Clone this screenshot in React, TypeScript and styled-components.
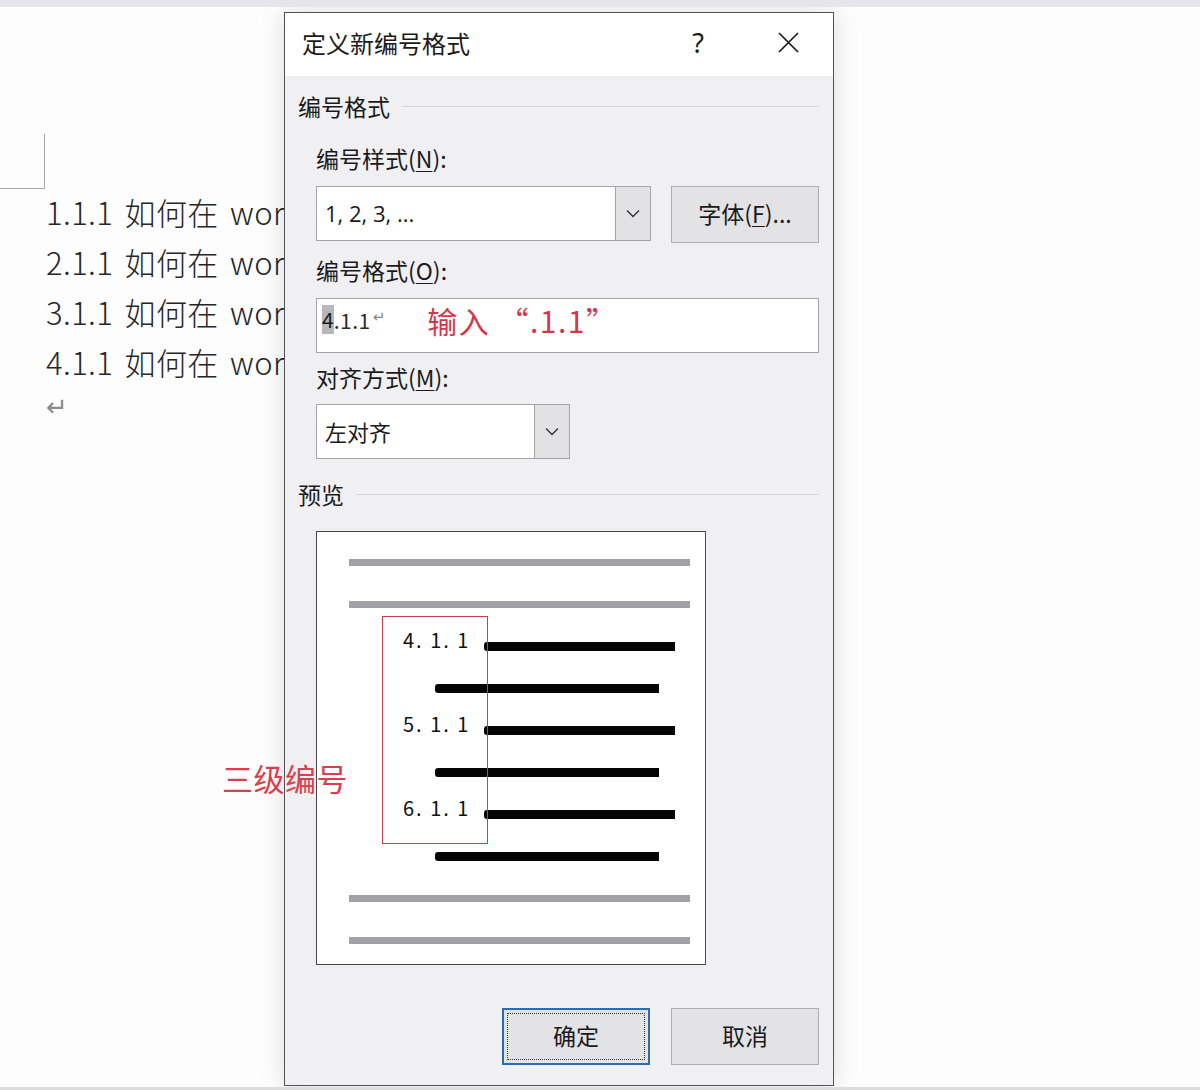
import styled, { createGlobalStyle } from 'styled-components';

const GlobalStyle = createGlobalStyle`
    html, body {
        margin: 0;
        padding: 0;
        background: #fdfdfe;
    }
    * {
        box-sizing: border-box;
    }
`

const CJK = `"Noto Sans CJK SC", "Noto Sans", sans-serif`;

const StyledPage = styled.div`
    position: relative;
    width: 1200px;
    height: 1090px;
    overflow: hidden;
    background: #fdfdfe;
    font-family: ${CJK};
    border-top: 7px solid #e6e6ea;
    border-bottom: 3px solid #dcdce0;
`

const StyledDoc = styled.div`
    display: flex;
    flex-direction: column;
    padding-top: 127px;
`

const StyledCorner = styled.div`
    width: 45px;
    height: 55px;
    border-right: 1px solid #a8a8ac;
    border-bottom: 1px solid #a8a8ac;
`

const StyledDocLines = styled.div`
    display: flex;
    flex-direction: column;
    width: 284px;
    overflow: hidden;
    padding: 0 0 0 46px;
    margin-top: -2px;
`

const StyledDocLine = styled.div`
    font-size: 31px;
    font-weight: 300;
    line-height: 50px;
    color: #262628;
    white-space: nowrap;
    letter-spacing: 0.4px;
    word-spacing: 4px;
`

const StyledReturn = styled.div`
    font-family: "DejaVu Sans", sans-serif;
    font-size: 26px;
    line-height: 40px;
    color: #8a8a8e;
`

const StyledDialog = styled.div`
    position: absolute;
    left: 284px;
    top: 5px;
    width: 550px;
    height: 1074px;
    display: flex;
    flex-direction: column;
    background: #f0f0f3;
    border: 1.5px solid #52525c;
    box-shadow: 0 0 24px rgba(0, 0, 0, 0.13);
`

const StyledTitleBar = styled.div`
    height: 63px;
    display: flex;
    align-items: center;
    padding: 0 0 5px 17px;
    background: #ffffff;
    color: #1a1a1a;
`

const StyledTitle = styled.div`
    flex: 1;
    font-size: 24px;
`

const StyledTitleIcon = styled.div`
    width: 90px;
    display: flex;
    justify-content: center;
    align-items: center;
    font-size: 27px;
    font-family: "Noto Sans", sans-serif;
`

const StyledBody = styled.div`
    flex: 1;
    display: flex;
    flex-direction: column;
    padding: 15px 14px 0 13px;
`

const StyledGroupHeader = styled.div<{ $top: number }>`
    display: flex;
    align-items: center;
    height: 30px;
    margin-top: ${(p) => p.$top}px;
    font-size: 23px;
    color: #1a1a1a;

    &::after {
        content: '';
        flex: 1;
        height: 1px;
        margin-left: 12px;
        background: #d6d6da;
    }
`

const StyledLabel = styled.div<{ $top: number }>`
    display: flex;
    margin: ${(p) => p.$top}px 0 0 18px;
    height: 28px;
    line-height: 28px;
    font-size: 23px;
    color: #1a1a1a;
`

const StyledKey = styled.span`
    text-decoration: underline;
    text-decoration-thickness: 1px;
    text-underline-offset: 3px;
`

const StyledRow = styled.div<{ $top: number }>`
    display: flex;
    align-items: flex-start;
    justify-content: space-between;
    margin: ${(p) => p.$top}px 0 0 18px;
`

const StyledCombo = styled.div<{ $width: number }>`
    width: ${(p) => p.$width}px;
    height: 55px;
    display: flex;
    border: 1px solid #a4a4aa;
    background: #ffffff;
`

const StyledComboText = styled.div`
    flex: 1;
    display: flex;
    align-items: center;
    padding: 0 0 2px 8px;
    font-family: "Open Sans", ${CJK};
    font-size: 22px;
    color: #1a1a1a;
`

const StyledComboButton = styled.div`
    width: 35px;
    display: flex;
    align-items: center;
    justify-content: center;
    background: #e2e2e5;
    border-left: 1px solid #a4a4aa;
`

const StyledButton = styled.div<{ $primary?: boolean }>`
    position: relative;
    width: 148px;
    height: 57px;
    display: flex;
    align-items: center;
    justify-content: center;
    padding-bottom: 3px;
    background: #e3e3e6;
    border: ${(p) => (p.$primary ? '2px solid #2a6cb8' : '1px solid #adadb2')};
    font-size: 23px;
    color: #1a1a1a;

    &::after {
        content: '';
        display: ${(p) => (p.$primary ? 'block' : 'none')};
        position: absolute;
        inset: 3px;
        border: 1px dotted #333;
    }
`

const StyledInput = styled.div<{ $top: number }>`
    height: 55px;
    margin: ${(p) => p.$top}px 0 0 18px;
    display: flex;
    align-items: center;
    padding: 0 0 12px 5px;
    border: 1px solid #a4a4aa;
    background: #ffffff;
`

const StyledHighlight = styled.span`
    font-size: 21px;
    line-height: 29px;
    color: #1a1a1a;
    background: #b8b8bc;
`

const StyledInputValue = styled.span`
    font-size: 21px;
    color: #2a2a2a;
    letter-spacing: 0.5px;
`

const StyledMarkReturn = styled.span`
    font-family: "DejaVu Sans", sans-serif;
    font-size: 15px;
    color: #888;
    margin: 0 0 6px 2px;
`

const StyledNote = styled.span`
    margin-left: 42px;
    font-size: 30px;
    color: #d2384a;
    letter-spacing: 1.5px;
`

const StyledPreview = styled.div<{ $top: number }>`
    position: relative;
    width: 390px;
    height: 434px;
    margin: ${(p) => p.$top}px 0 0 18px;
    display: flex;
    flex-direction: column;
    padding-top: 9px;
    background: #ffffff;
    border: 1px solid #46464e;
`

const StyledPreviewRow = styled.div`
    height: 42px;
    display: flex;
    align-items: center;
`

const StyledBar = styled.div<{ $left: number; $width: number; $dark?: boolean }>`
    margin-left: ${(p) => p.$left}px;
    width: ${(p) => p.$width}px;
    height: ${(p) => (p.$dark ? 9 : 7)}px;
    background: ${(p) => (p.$dark ? '#050505' : '#a2a2a6')};
    border-radius: ${(p) => (p.$dark ? '3px 0 0 3px' : '0')};
`

const StyledNum = styled.div`
    width: 81px;
    margin: 0 0 14px 86px;
    font-size: 20px;
    color: #111;
    letter-spacing: 2px;
    white-space: pre;
`

const StyledRedBox = styled.div`
    position: absolute;
    left: 65px;
    top: 84px;
    width: 106px;
    height: 228px;
    border: 1px solid #c4404c;
`

const StyledFooter = styled.div<{ $top: number }>`
    display: flex;
    justify-content: flex-end;
    gap: 21px;
    margin-top: ${(p) => p.$top}px;
`

const StyledAnnotation = styled.div`
    position: absolute;
    left: 222px;
    top: 748px;
    font-size: 31px;
    color: #d8404e;
    letter-spacing: 0.5px;
`

function Chevron() {
    return (
        <svg width="14" height="9" viewBox="0 0 14 9">
            <polyline points="1,1.5 7,7.5 13,1.5" fill="none" stroke="#333" strokeWidth="1.4" />
        </svg>
    );
}

function CloseIcon() {
    return (
        <svg width="21" height="21" viewBox="0 0 21 21">
            <path d="M1 1 L20 20 M20 1 L1 20" stroke="#1a1a1a" strokeWidth="1.7" />
        </svg>
    );
}

const docLines = ['1.1.1', '2.1.1', '3.1.1', '4.1.1'];
const previewNums = ['4. 1. 1', '5. 1. 1', '6. 1. 1'];

export default function App() {
    return (
        <StyledPage>
            <GlobalStyle />
            <StyledDoc>
                <StyledCorner />
                <StyledDocLines>
                    {docLines.map((n) => (
                        <StyledDocLine key={n}>{n} 如何在 word</StyledDocLine>
                    ))}
                    <StyledReturn>↵</StyledReturn>
                </StyledDocLines>
            </StyledDoc>

            <StyledDialog>
                <StyledTitleBar>
                    <StyledTitle>定义新编号格式</StyledTitle>
                    <StyledTitleIcon>?</StyledTitleIcon>
                    <StyledTitleIcon>
                        <CloseIcon />
                    </StyledTitleIcon>
                </StyledTitleBar>

                <StyledBody>
                    <StyledGroupHeader $top={0}>编号格式</StyledGroupHeader>

                    <StyledLabel $top={23}>
                        <span>编号样式(</span>
                        <StyledKey>N</StyledKey>
                        <span>):</span>
                    </StyledLabel>
                    <StyledRow $top={14}>
                        <StyledCombo $width={335}>
                            <StyledComboText>1, 2, 3, ...</StyledComboText>
                            <StyledComboButton>
                                <Chevron />
                            </StyledComboButton>
                        </StyledCombo>
                        <StyledButton>
                            <span>字体(</span>
                            <StyledKey>F</StyledKey>
                            <span>)...</span>
                        </StyledButton>
                    </StyledRow>

                    <StyledLabel $top={13}>
                        <span>编号格式(</span>
                        <StyledKey>O</StyledKey>
                        <span>):</span>
                    </StyledLabel>
                    <StyledInput $top={14}>
                        <StyledHighlight>4</StyledHighlight>
                        <StyledInputValue>.1.1</StyledInputValue>
                        <StyledMarkReturn>↵</StyledMarkReturn>
                        <StyledNote>输入 “.1.1”</StyledNote>
                    </StyledInput>

                    <StyledLabel $top={10}>
                        <span>对齐方式(</span>
                        <StyledKey>M</StyledKey>
                        <span>):</span>
                    </StyledLabel>
                    <StyledRow $top={13}>
                        <StyledCombo $width={254}>
                            <StyledComboText>左对齐</StyledComboText>
                            <StyledComboButton>
                                <Chevron />
                            </StyledComboButton>
                        </StyledCombo>
                    </StyledRow>

                    <StyledGroupHeader $top={20}>预览</StyledGroupHeader>

                    <StyledPreview $top={22}>
                        <StyledPreviewRow>
                            <StyledBar $left={32} $width={341} />
                        </StyledPreviewRow>
                        <StyledPreviewRow>
                            <StyledBar $left={32} $width={341} />
                        </StyledPreviewRow>
                        {previewNums.map((n) => (
                            <div key={n}>
                                <StyledPreviewRow>
                                    <StyledNum>{n}</StyledNum>
                                    <StyledBar $dark $left={0} $width={191} />
                                </StyledPreviewRow>
                                <StyledPreviewRow>
                                    <StyledBar $dark $left={118} $width={224} />
                                </StyledPreviewRow>
                            </div>
                        ))}
                        <StyledPreviewRow>
                            <StyledBar $left={32} $width={341} />
                        </StyledPreviewRow>
                        <StyledPreviewRow>
                            <StyledBar $left={32} $width={341} />
                        </StyledPreviewRow>
                        <StyledRedBox />
                    </StyledPreview>

                    <StyledFooter $top={43}>
                        <StyledButton $primary>确定</StyledButton>
                        <StyledButton>取消</StyledButton>
                    </StyledFooter>
                </StyledBody>
            </StyledDialog>

            <StyledAnnotation>三级编号</StyledAnnotation>
        </StyledPage>
    );
}
